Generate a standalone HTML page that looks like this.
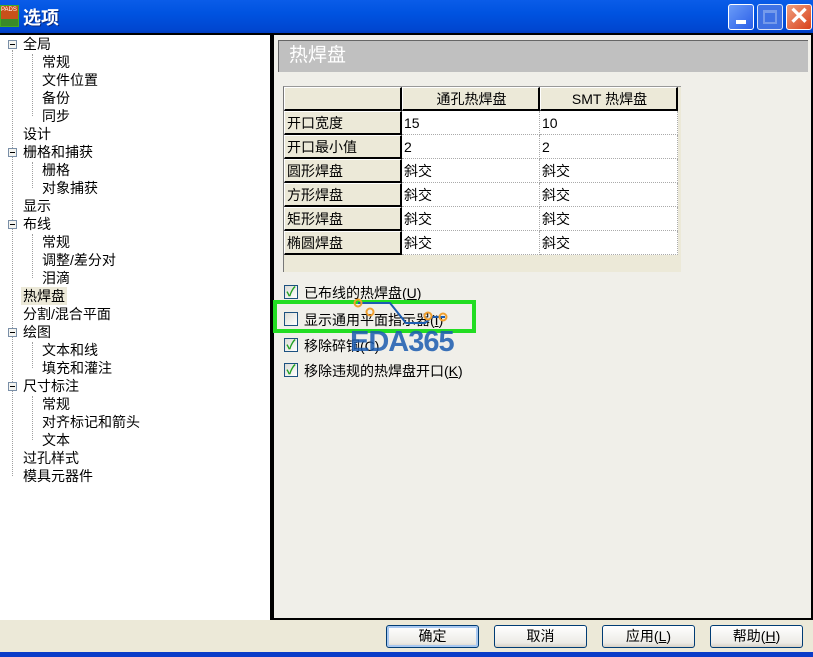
<!DOCTYPE html>
<html><head><meta charset="utf-8"><style>
*{margin:0;padding:0;box-sizing:border-box}
body{width:813px;height:657px;overflow:hidden;background:#ece9d8;font:13px "Liberation Sans","WenQuanYi Zen Hei","Noto Sans CJK SC",sans-serif;position:relative;color:#000}
.a{position:absolute}
.title{left:0;top:0;width:813px;height:33px;background:linear-gradient(#0a5ce8,#0053e0 40%,#0046d0 90%,#003cc0)}
.tb{top:4px;width:26px;height:26px;border:1px solid #fff;border-radius:3px}
.tree div{position:absolute;white-space:nowrap;line-height:18px;height:18px;font-size:14px}
.tree .pm{position:absolute;width:9px;height:9px;border:1px solid #7a8fa8;background:#f4f4f0;font-size:0;line-height:0}
.tree .pm i{position:absolute;left:1px;top:3px;width:5px;height:1px;background:#000}
.vl{position:absolute;border-left:1px dotted #a0a0a0}
.cell{position:absolute;height:24px;line-height:24px;padding-left:2px;white-space:nowrap;font-size:14px}
.rh{background:#ece9d8;border:1px solid #fff;border-right:2px solid #000;border-bottom:2px solid #000;left:284px;width:118px;line-height:22px}
.c1,.c2{background:#fff;border-bottom:1px dotted #aaa;border-right:1px dotted #aaa}
.c1{left:402px;width:138px}.c2{left:540px;width:138px}
.cb{position:absolute;left:284px;width:14px;height:14px;border:1px solid #1c5180;background:linear-gradient(135deg,#dcdcd6,#fff)}
.lbl{position:absolute;left:304px;white-space:nowrap;font-size:14px}
.btn{position:absolute;top:625px;width:93px;height:23px;border:1px solid #003c74;border-radius:3px;background:linear-gradient(#fff,#ecebe6 80%,#d6d0c5);text-align:center;line-height:21px;font-size:14px}
</style></head><body>
<div class="a title"></div>
<div class="a" style="left:0;top:5px;width:19px;height:22px;background:#c8501a;border:1px solid #4a2"><div class="a" style="left:0;top:13px;width:17px;height:7px;background:#3a8a2a"></div><div class="a" style="left:0;top:1px;font-size:6px;color:#fff;line-height:7px">PADS</div></div>
<div class="a" style="left:23px;top:4px;color:#fff;font-size:18px;font-weight:bold;text-shadow:1px 1px #0a2a80">选项</div>
<div class="a tb" style="left:728px;background:linear-gradient(135deg,#6a9cf8,#2a5ee8)"><div class="a" style="left:7px;top:15px;width:10px;height:4px;background:#fff"></div></div>
<div class="a tb" style="left:757px;background:#4a78e6;opacity:.85"><div class="a" style="left:5px;top:5px;width:14px;height:14px;border:2px solid #8aa8ee;border-top-width:3px"></div></div>
<div class="a tb" style="left:786px;background:linear-gradient(135deg,#f0a080,#d8401a);font-size:24px;color:#fff;text-align:center;line-height:24px;font-weight:bold">✕</div>

<div class="a" style="left:0;top:33px;width:272px;height:587px;background:#fff;border-top:2px solid #000;border-right:2px solid #000"></div>
<div class="a" style="left:272px;top:33px;width:541px;height:587px;border:2px solid #000;background:#f0efe9"></div>
<div class="a" style="left:0;top:652px;width:813px;height:5px;background:#0a3cc8"></div>

<div class="a tree" style="left:0;top:0">
<div class="vl" style="left:12px;top:50px;height:426px"></div>
<div class="vl" style="left:32px;top:54px;height:62px"></div>
<div class="vl" style="left:32px;top:162px;height:26px"></div>
<div class="vl" style="left:32px;top:234px;height:44px"></div>
<div class="vl" style="left:32px;top:342px;height:26px"></div>
<div class="vl" style="left:32px;top:396px;height:44px"></div>
<div class="pm" style="left:8px;top:40px"><i></i></div>
<div class="pm" style="left:8px;top:148px"><i></i></div>
<div class="pm" style="left:8px;top:220px"><i></i></div>
<div class="pm" style="left:8px;top:328px"><i></i></div>
<div class="pm" style="left:8px;top:382px"><i></i></div>
<div style="left:23px;top:35px">全局</div>
<div style="left:42px;top:53px">常规</div>
<div style="left:42px;top:71px">文件位置</div>
<div style="left:42px;top:89px">备份</div>
<div style="left:42px;top:107px">同步</div>
<div style="left:23px;top:125px">设计</div>
<div style="left:23px;top:143px">栅格和捕获</div>
<div style="left:42px;top:161px">栅格</div>
<div style="left:42px;top:179px">对象捕获</div>
<div style="left:23px;top:197px">显示</div>
<div style="left:23px;top:215px">布线</div>
<div style="left:42px;top:233px">常规</div>
<div style="left:42px;top:251px">调整/差分对</div>
<div style="left:42px;top:269px">泪滴</div>
<div style="left:21px;top:287px;background:#ece9d8;padding:0 2px">热焊盘</div>
<div style="left:23px;top:305px">分割/混合平面</div>
<div style="left:23px;top:323px">绘图</div>
<div style="left:42px;top:341px">文本和线</div>
<div style="left:42px;top:359px">填充和灌注</div>
<div style="left:23px;top:377px">尺寸标注</div>
<div style="left:42px;top:395px">常规</div>
<div style="left:42px;top:413px">对齐标记和箭头</div>
<div style="left:42px;top:431px">文本</div>
<div style="left:23px;top:449px">过孔样式</div>
<div style="left:23px;top:467px">模具元器件</div>
</div>

<div class="a" style="left:278px;top:40px;width:530px;height:32px;background:#c0c0c0;border-top:1px solid #666;border-left:1px solid #666;color:#fff;font-size:19px;line-height:30px;padding-left:10px">热焊盘</div>

<div class="a" style="left:283px;top:86px;width:398px;height:186px;background:#ece9d8;border-top:1px solid #999;border-left:1px solid #777"></div>
<div class="cell rh" style="top:87px"></div>
<div class="cell rh" style="left:402px;width:138px;top:87px;text-align:center">通孔热焊盘</div>
<div class="cell rh" style="left:540px;width:138px;top:87px;text-align:center">SMT 热焊盘</div>
<div class="cell rh" style="top:111px">开口宽度</div><div class="cell c1" style="top:111px">15</div><div class="cell c2" style="top:111px">10</div>
<div class="cell rh" style="top:135px">开口最小值</div><div class="cell c1" style="top:135px">2</div><div class="cell c2" style="top:135px">2</div>
<div class="cell rh" style="top:159px">圆形焊盘</div><div class="cell c1" style="top:159px">斜交</div><div class="cell c2" style="top:159px">斜交</div>
<div class="cell rh" style="top:183px">方形焊盘</div><div class="cell c1" style="top:183px">斜交</div><div class="cell c2" style="top:183px">斜交</div>
<div class="cell rh" style="top:207px">矩形焊盘</div><div class="cell c1" style="top:207px">斜交</div><div class="cell c2" style="top:207px">斜交</div>
<div class="cell rh" style="top:231px">椭圆焊盘</div><div class="cell c1" style="top:231px">斜交</div><div class="cell c2" style="top:231px">斜交</div>

<div class="cb" style="top:285px;color:#21a121;font-size:13px;line-height:12px;text-align:center;font-weight:bold">✓</div><div class="lbl" style="top:283px">已布线的热焊盘(<u>U</u>)</div>
<div class="a" style="left:273px;top:300px;width:203px;height:33px;border:4px solid #22dd22"></div>
<div class="cb" style="top:312px"></div><div class="lbl" style="top:310px">显示通用平面指示器(<u>I</u>)</div>
<div class="cb" style="top:338px;color:#21a121;font-size:13px;line-height:12px;text-align:center;font-weight:bold">✓</div><div class="lbl" style="top:336px">移除碎铜(C)</div>
<div class="cb" style="top:363px;color:#21a121;font-size:13px;line-height:12px;text-align:center;font-weight:bold">✓</div><div class="lbl" style="top:361px">移除违规的热焊盘开口(<u>K</u>)</div>

<div class="a" style="left:350px;top:326px;color:#1b5cb0;font-size:29px;font-weight:bold;opacity:.85;letter-spacing:-1px">EDA365</div>
<svg class="a" style="left:350px;top:295px" width="110" height="30"><path d="M8 8H40L56 28H75L82 22H95" stroke="#1b5cb0" stroke-width="2" fill="none"/><circle cx="8" cy="8" r="3.5" fill="none" stroke="#f0a030" stroke-width="2"/><circle cx="20" cy="17" r="3.5" fill="none" stroke="#f0a030" stroke-width="2"/><circle cx="78" cy="21" r="3.5" fill="none" stroke="#f0a030" stroke-width="2"/><circle cx="93" cy="22" r="3.5" fill="none" stroke="#f0a030" stroke-width="2"/></svg>

<div class="btn" style="left:386px;border-color:#003c74;box-shadow:inset 0 0 0 2px #a8c8f0">确定</div>
<div class="btn" style="left:494px">取消</div>
<div class="btn" style="left:602px">应用(<u>L</u>)</div>
<div class="btn" style="left:710px">帮助(<u>H</u>)</div>
</body></html>
